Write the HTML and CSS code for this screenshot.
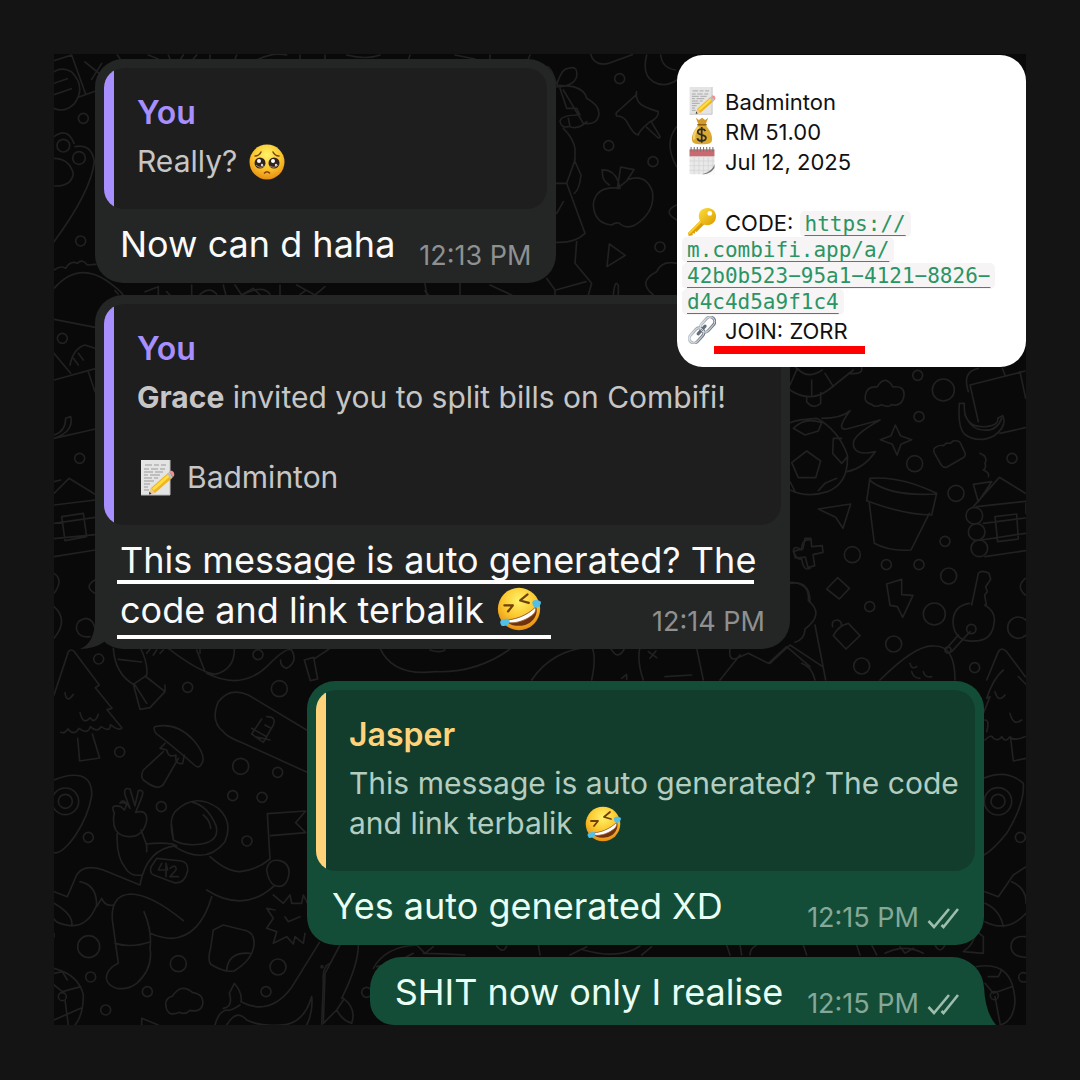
FILE: index.html
```html
<!DOCTYPE html>
<html lang="en">
<head>
<meta charset="utf-8">
<meta name="viewport" content="width=device-width, initial-scale=1">
<title>Group chat</title>
<link rel="stylesheet" href="styles.css">
</head>
<body>
<svg class="defs" width="0" height="0" aria-hidden="true">
  <defs>
    <radialGradient id="face" cx=".5" cy=".3" r=".72">
      <stop offset="0" stop-color="#fff36b"/><stop offset=".55" stop-color="#fbc62c"/><stop offset="1" stop-color="#e58a12"/>
    </radialGradient>
    <linearGradient id="gold" x1="0" y1="0" x2="1" y2="1">
      <stop offset="0" stop-color="#ffe03a"/><stop offset="1" stop-color="#d99a00"/>
    </linearGradient>
    <linearGradient id="steel" x1="0" y1="0" x2="1" y2="1">
      <stop offset="0" stop-color="#c9d1d8"/><stop offset="1" stop-color="#68727c"/>
    </linearGradient>
    <symbol id="memo" viewBox="0 0 36 36">
      <path d="M2 0h29v35H2z" fill="#e4e4e4"/>
      <path d="M31 0v35H2" fill="none" stroke="#bcbcbc"/>
      <path d="M6 5h7m2 0h5m2 0h5M5 9h5m2 0h7m2 0h5M5 12h9m2 0h8M5 15h4m2 0h10M5 18h8m2 0h4M5 21h10M5 24h6M5 27h4M5 30h5" stroke="#999" fill="none"/>
      <path d="M12 28 29 13l4 5-17 15-6 1z" fill="#eeb51e"/>
      <path d="M13 28.500 30 13.500l2 2-17 15z" fill="#ffdc46"/>
      <path d="m12 28 4 5-6 1z" fill="#efc998"/><path d="m10.500 31.500 2 2.500-2.500.500z" fill="#333"/>
      <path d="m28 14 2-2 4 5-2 2z" fill="#b9bec2"/><path d="m30 12 1-1c3-1 5 2 4 5l-1 1z" fill="#ef8f92"/>
    </symbol>
    <symbol id="plead" viewBox="0 0 36 36">
      <circle cx="18" cy="18" r="17.500" fill="url(#face)"/>
      <circle cx="11" cy="19" r="5.500" fill="#33231b"/><circle cx="25" cy="19" r="5.500" fill="#33231b"/>
      <circle cx="10" cy="17" r="2" fill="#fff"/><circle cx="24" cy="17" r="2" fill="#fff"/>
      <circle cx="13" cy="21" r="1.200" fill="#ddd"/><circle cx="27" cy="21" r="1.200" fill="#ddd"/>
      <path d="M7 21q4 4 8 1M21 22q4 3 8-1" stroke="#9e8978" fill="none"/>
      <path d="M6 12q4 0 6-4M30 12q-4 0-6-4" stroke="#77440f" stroke-width="1.500" fill="none" stroke-linecap="round"/>
      <path d="M15.500 29q2.500-2.500 5 0" stroke="#863c12" stroke-width="1.600" fill="none" stroke-linecap="round"/>
    </symbol>
    <symbol id="rofl" viewBox="0 0 36 36">
      <circle cx="18" cy="18" r="17.300" fill="url(#face)"/>
      <path d="M6 27C15 27 25 23 32 16c2 6-2 13-9 15-7 2-13 0-17-4z" fill="#713111"/>
      <path d="M6.500 27C15 27 25 23 31.500 16.500c.5 3-.5 4-1 5C25 27 16 30 9.500 29.200z" fill="#fff" stroke="#9b6430" stroke-width=".7"/>
      <path d="m6 15 7 0-4 5M25 6l-6 5 7 2" stroke="#70400b" stroke-width="1.800" fill="none" stroke-linecap="round" stroke-linejoin="round"/>
      <path d="M29 14c-1-4 4-4 7-2 0 4-4 6-6 4zM9 26c3 2 1 6-5 6-3-4-1-6 5-6z" fill="#52bfe8"/>
    </symbol>
    <symbol id="bag" viewBox="0 0 36 36">
      <path d="m10 1 4 3 4-3 4 3 4-3-4 10h-8z" fill="#d29a2f"/>
      <path d="M14 10h8c5 5 9 12 9 18 0 6-3 7-13 7S5 34 5 28c0-6 4-13 9-18z" fill="#dba832"/>
      <path d="M14 13c-4 4-7 10-6 16" stroke="#f4d269" stroke-width="3" fill="none"/>
      <path d="M12 10h12" stroke="#8e5e13" stroke-width="2"/>
      <path d="M22.500 18c-1-2-3-2.500-5-2.500-3 0-5 1.500-5 3.800 0 5 10.500 2.500 10.500 7.500 0 2.500-2.500 4-5.500 4-2.500 0-5-1-5.500-3.500M17.600 13v20" stroke="#2f2c20" stroke-width="2.200" fill="none"/>
    </symbol>
    <symbol id="calendar" viewBox="0 0 36 36">
      <path d="M2 3h32v32H2z" fill="#e9e9e9"/><path d="M2 3h32v9H2z" fill="#c86a70"/>
      <path d="M4 0v6m4-6v6m4-6v6m4-6v6m4-6v6m4-6v6m4-6v6m4-6v6" stroke="#777" stroke-width="1.400"/>
      <path d="M8 12v23m6-23v23m6-23v23m6-23v23m6-23v20M2 18h32M2 24h32M2 30h28" stroke="#d5d5d5"/>
      <path d="M34 23v12H18c6-1 12-5 16-12z" fill="#fafafa"/><path d="M34 22c-2 7-8 11-16 13 7 0 12-2 16-8z" fill="#777"/>
    </symbol>
    <symbol id="key" viewBox="0 0 36 36">
      <path d="m17 15 5 5-11 11-2-1v3l-3-1v3l-5 1-1-4z" fill="#dc9f06"/><path d="m17 15 2 2L2 34l-2-2z" fill="#f8cd2c"/>
      <path d="M14 12C13 5 18 0 25 0c7 0 11 5 11 11 0 7-6 12-13 11-5-1-8-4-9-10z" fill="url(#gold)"/>
      <circle cx="28" cy="7" r="3" fill="#fff"/>
    </symbol>
    <symbol id="link" viewBox="0 0 36 36">
      <g fill="none" stroke-width="4"><rect x="14" y="5" width="22" height="12" rx="6" transform="rotate(-48 25 11)" stroke="url(#steel)"/>
      <rect x="0" y="19" width="22" height="12" rx="6" transform="rotate(-48 11 25)" stroke="url(#steel)"/>
      <path d="m13 23 9-10" stroke="#646d76" stroke-linecap="round"/></g>
      <g fill="none" stroke="#eef2f5"><rect x="14" y="5" width="22" height="12" rx="6" transform="rotate(-48 25 11)"/><rect x="0" y="19" width="22" height="12" rx="6" transform="rotate(-48 11 25)"/></g>
    </symbol>
    <symbol id="ticks" viewBox="0 0 32 22">
      <path d="m1.500 14 5.500 6L22 2M14.500 18l2 2L31 2" fill="none" stroke="currentColor" stroke-width="2.600"/>
    </symbol>
  </defs>
</svg>

<main class="chat">
  <svg class="wallpaper" viewBox="54 54 972 971" preserveAspectRatio="xMidYMin slice" aria-hidden="true">
    <g transform="translate(40 40) scale(.33333)">
      <path d="M42 62 95 45l42 118M135 66l62 50M185 70l-30 48M42 95q25-15 52 0 45 45 10 95-30 30-62 15M42 130l40-14M42 164l52-18M115 172l50-18M42 290q40-30 60 20M105 320q50-10 58 45-10 90-121 240M42 355q45 0 58 45-5 40-58 38M42 690q20-15 35-5 15-25 35-15 15-15 30 5l25-2M42 745q70-80 155-25 50 35 55 50M315 755l40-15v30M455 735v35M550 735l8 32M585 735l20 30 35-20 20 20M720 735v35M770 735l55 30 30-25M325 45l30 12M385 45l5 12M430 45l-8 12M470 45l-10 12M510 45v12M590 45l-5 12M650 60q50-25 90-15M780 45v12M855 45v12M920 45q60 15 100 0M232 45l10 14"/>
      <circle cx="130" cy="235" r="15"/><circle cx="70" cy="317" r="19"/><circle cx="117" cy="354" r="19"/><circle cx="122" cy="603" r="15"/>
    </g>
    <g transform="translate(400 40) scale(.33333)">
      <path d="M572 43q10 35 50 28l75-27M740 45q-15 60 20 80 35 20 70-5M782 45q5 40 45 45M710 155q-5 10 5 30 10 15 60 30 0 20-25 30-35 30-35 40-15-3-30-32-10-25-35-25-5-10 5-15l55-50M740 262l35 32q5 0 5-5l-25-42M605 390q35-3 50 35l5 20q-70-10-80 45 0 60 55 65 10-8 22-6 20 20 50 5 60-40 50-100-20-55-75-35l20-30-40-8-10 65 30-25M608 390q-5 30 20 45M628 612l48 34-55 34zM440 80q15 0 30 55l50 5q35 10 40 35 45 25 35 55-5 25-45 20l-60-100M470 135q15-50 35-50 30-10 25 25-10 30-60 30M480 145l20 60h30l10 20q-60 0-60 20 5 20 25 15M505 235l5 25q25 10 50-15M490 265q30 30 35 60v35l-25 70h-32M523 360l20 45q-5 45-20 55M500 430l55 150q-30 30-87 27M530 605l-5 65 50 60-10 35M468 750l90-25M440 715l25 35v15M470 520l20-35M75 730l5 35M180 730v35M270 735l65 30M640 765q5-50 15-28v30M830 260q-40 50 0 120M830 495q-45 20 0 45M830 670q-45-10-60 25-60 30-10 70M30 45l-5 15M165 45l60 12M270 45v12M390 45l-5 12"/>
      <circle cx="659" cy="116" r="15"/><circle cx="626" cy="317" r="15"/><circle cx="759" cy="365" r="15"/><circle cx="780" cy="621" r="15"/>
    </g>
    <g transform="translate(40 290) scale(.33333)">
      <path d="M42 88l124 24M42 190l50 60M42 270l124-34M90 225q10-50 45-60l30 10M115 190l15 20M100 205l15 20M145 245l20 60M42 435q35-10 35-50l15-5q10 45-50 65M42 445l124-28M42 610l45-45 78 48M42 575l20-5M42 645l124-15M42 700l124-18M42 746l124-12M65 680l65-10 10 70-65 12zM42 800l124-20M42 850q30 20 0 60M42 950q45 40 0 95M165 870q-35 20 0 40M110 1020q-5-30 30-35 20 5 25 30M110 1020q10 25 40 20M225 2l10 10M390 15l-10-10M480 13q30-25 50 0M610 13q60-30 80 0M1155 2l10 12M780 13l15-10"/>
      <circle cx="67" cy="145" r="15"/><circle cx="119" cy="505" r="15"/>
    </g>
    <g transform="translate(430 500) scale(.33333)">
      <path d="M-150 445q40 85 165 70 130 5 235-75M305 540q60-90 180-100 15 30 0 100M540 442q25 45 45 0M630 442q-10 40 10 98M800 445l20 95M655 455l25 18M678 453l-18 22M705 530l80-5M575 535l15-12v15M0 450q30 10 45 0M900 445q-5 40 20 30l35-15 60 30 55-50 70 60M870 540l60-75M1090 150q5-15 25 0 0-35 25-30M1090 155q15 30 25 20 5 40 25 30M1080 250q60-10 60 55"/>
    </g>
    <g transform="translate(770 360) scale(.33333)">
      <path d="M60 75l22-50q30 35 75 5M60 90q60 40 115 0l75-60M125 60v45M165 40l25 40M85 30q-10-10-15-15M235 40q45 5 40-17M110 110v15q20 25 42 5v-32M305 133q-25-5-18-30 5-25 34-22 25-40 48 0 35-5 33 25-5 35-38 28-5 10-29 0-20 10-30-1zM60 188q25-10 80-13 65 35 92 110 5 85-60 110-60 20-112-5M70 205q35-35 85-17l-10 25-40 12zM110 273l42 30-15 50H85l-20-45zM155 175q60 0 85-23-45 60-10 55l100-27q-80 45-80 70 0 40 66 25-35 50-84 60M190 235h25M190 235l-2 45 27 30 18-20M60 365l15 30M145 392l20-22 35-15M376 195l15 32 34 12-32 14-12 32-14-32-36-14 32-12zM495 263q15-10 25-6l10-8q15 3 18-6 20-3 24 8l14 30q0 10-12 15l-44 26q-12 2-18-10l-20-35q-2-12 3-14zM600 75l165-42M600 75l25 110M595 95q-20-60 30-70M697 25l8 20M750 35l17 80M568 130h15q-5 75 65 70 40-5 35-25l15-8q15 30-25 60-50 25-90-5-20-20-15-90zM585 165q20 45 55 45 40 5 55-35M690 220l76-17M300 355q90-8 200 45l-15 65q-80 0-195-43zM298 360q60 50 202 42M298 430l15 120q45 25 110 20l55-110M145 447l97-15-23 73-22-33zM105 535h18l2 25 32-3 2 20-30 7 5 33-20 6-8-32-30 3-5-20 28-8zM203 653l35 32-30 32-38-30zM350 672l45-14v46l34 2-31 66-16-32-22-4zM630 280q25 10 15 30 5 15-5 20 20 8 15 20M610 373l55-8-40 60zM610 440l78-88 78 48M620 440l146-16M640 490l126-16M635 540l131-20M645 590l121-18M675 470l65-8 5 75-62 8zM625 640q10-12 32 0l5 18-15 22 5 15-8 10 5 30h-5q35 20 28 55-5 45-45 52-75 10-78-55 0-50 50-57M605 735l20-95M565 825l-35 40M600 815l-55 60M330 960q110-110 165-102 60 0 60 102M420 910q5 20 20 10M425 935q5 20 25 20M460 935q5 20 25 15M60 667q60 0 55 55 50 40-10 85 0 30-30 40M135 795l32 165M0 910l60-55 98 65M95 910q30 10 40 50M650 960l35-85q10-15 25 0l56 75M235 790l35 37-42 40-38-40q15-30 45-37zM188 800q-5-20 15-20 15 5 10 20M766 655q-30 25 0 50M768 430v30"/>
      <circle cx="443" cy="46" r="15"/><circle cx="520" cy="90" r="33"/><circle cx="447" cy="170" r="15"/><circle cx="434" cy="311" r="24"/><circle cx="558" cy="400" r="24"/><circle cx="726" cy="295" r="15"/><circle cx="247" cy="584" r="24"/><circle cx="525" cy="544" r="15"/><circle cx="349" cy="614" r="15"/><circle cx="447" cy="614" r="15"/><circle cx="536" cy="648" r="24"/><circle cx="493" cy="762" r="33"/><circle cx="299" cy="740" r="15"/><circle cx="371" cy="852" r="24"/><circle cx="275" cy="918" r="24"/><circle cx="614" cy="923" r="15"/><circle cx="604" cy="807" r="14"/><circle cx="534" cy="870" r="9"/><circle cx="613" cy="467" r="25"/><circle cx="620" cy="516" r="25"/><circle cx="628" cy="565" r="25"/><circle cx="745" cy="803" r="32"/>
    </g>
    <g transform="translate(40 640) scale(.33333)">
      <path d="M42 165 85 35q8-10 18 0l75 100-12 8 50 62-15 4 45 55q-10 10-35-10 0 25-28 6-10 20-32 0-8 25-34 5-15 25-33 2-10 15-22 10M75 158q5 35 25 5M120 218q10 40 30 15 15 20 25-10M113 295l6 68 60-9-22-72M220 25q5 75 60 108l40-27q5-35-20-85M235 58l70 8M280 133l20 75 30-5 45-48-60-47M285 135l35 55M325 115l50 40v-20M385 25q90 70 140 78 60-15 58-78M470 30l25 65M480 25v15M320 40l10-12M340 45l10-15M360 40l10-10M500 100q110 55 190-30 50-50 65-40 20 35-15 55-20-5-18-25M793 60l28-8 12 65-22 5zM825 55l42-28M800 270 625 165q-55-25-90 20-25 60 15 90 10 15 60 35l190 86M680 230q30 0 20 25l-30 52-35-25 30-45M635 265l45 25M645 290l45 10M675 255l15 8M345 260q65-15 115 40 35 40 28 65-10 25-25 10-50-45-115-95-10-15-3-20zM375 310l-15 15 20 5q5 25 28 15-5 30 20 25l5-25M370 335l-60 55q-10 20 0 30 50 40 65 5l40-70M42 420q45-20 80-12 35 10 33 60-10 60-50 120-40 55-63 50M223 520q-15-30 20-20l10 10q15-25-10-22M240 490q10-20 30 15l-15-40q-5-25 15-18l15 50 10-45q20-5 10 20l-18 45q35-10 33 25-10 50-55 48-55-5-42-72M232 575q-5 75 25 110 15 25 47 20M303 570l17 45v20M318 612q45-5 80 0l10 5M300 735q20-110 110-118M400 600q-15-60 5-85 60-60 130-10 45 40 20 100-60 75-155 12M400 600q35 20 85 12 55-10 43-55-25-60-70-70M395 555q5 40 5 45M490 525q20 15 22 40M350 655l75 8q20 5 18 30-10 40-40 35l-60-22q-15-5-10-25zM365 670l-10 20h28l-5-20v40M390 685q20-15 18 5l-18 20h25M510 650q50 45 90 45 50-5 90-38M680 690q5-35 40-28 35 10 25 50-10 35-40 25-20-10-25-47zM700 740q-90 80-200 10M515 770q-35 120-120 125-30 0-65-15M312 815q25 60 18 110 10 60-40 105-25 20-60 15-40-15-28-45 10-20 33-30l-18-130q-5-75 55-78 60 0 158 80M225 910q50 15 105-5M300 735l-110-45q-60-20-80 15l-28 65-40-15M120 725q50 10 50 70-25 65-80 62-40-5-48-20M42 790q60 35 53 68M170 800l15-25q10 25 35 20M42 890l0-10M690 658l-8-137 115-8-30 35 30 30-105 9M700 765l30 25 20-25 5 25h30l5-25 15 30M680 805l25 5M680 805l20 30-20 30 30 10-10 35 40-20 20 22 5-22 25 20 5-30M735 830l10 15 35-15M520 870l30-15 60 15q35 5 32 45-5 45-60 78-30 5-70-20-10-15 0-50zM560 990q5-55 70-50M42 985q75 20 88 80 0 60-25 90M42 1035l25 20 55-15M42 1140l80-35M42 1000l25-5 15 25M75 1080l10 75M378 1100q-5-25 20-32 25-40 60-10 35 5 30 35-5 25-38 18-15 15-32 6-35 15-40-17zM305 1155v-20l50 20M550 1105q30-5 18-45l15-30q25 30 20 55 85 45 150-40l85-137M525 1155q10-40 35-45 10 5 40-15M560 1155q30-50 60-15 40 20 100 15 70 0 95-85 5 45-15 85M870 970q-25 10-20 60l-5 125"/>
      <circle cx="176" cy="57" r="15"/><circle cx="654" cy="44" r="15"/><circle cx="718" cy="146" r="24"/><circle cx="443" cy="142" r="15"/><circle cx="239" cy="336" r="15"/><circle cx="602" cy="379" r="24"/><circle cx="713" cy="397" r="15"/><circle cx="578" cy="467" r="15"/><circle cx="666" cy="472" r="15"/><circle cx="364" cy="500" r="15"/><circle cx="145" cy="592" r="15"/><circle cx="621" cy="603" r="15"/><circle cx="76" cy="484" r="21"/><circle cx="76" cy="484" r="40"/><circle cx="146" cy="920" r="33"/><circle cx="415" cy="971" r="24"/><circle cx="714" cy="981" r="24"/><circle cx="678" cy="1055" r="15"/><circle cx="322" cy="1055" r="15"/><circle cx="152" cy="1011" r="15"/><circle cx="197" cy="1110" r="15"/><circle cx="67" cy="1070" r="12"/>
    </g>
    <g transform="translate(300 670) scale(.33333)">
      <path d="M175 825q0 60-50 160M130 985q40 30 25 75-30-10-45-40l-40 40 5-150 45-85M110 1020l20-30M220 895q35-65 130-70M230 890q60-10 110-40M370 850q60 0 125 5M350 825l25 25 25-20M590 828q20 25 30 0M715 825l5 30M810 855l50-25M850 840q110 30 170-12"/>
      <circle cx="200" cy="967" r="15"/><circle cx="66" cy="890" r="3"/>
    </g>
    <g transform="translate(640 670) scale(.33333)">
      <path d="M1090 0q-30 25-50 85l10-5-20 50M1065 65q10 35 30 10M1110 130q10 40 35 20M1035 150q15 0 5 35M1035 210q20-20 25-5 15 10 25-5 10 20 25 0 10 15 45 0M1112 205l8 68 38-8M1030 325q70-30 120 15 5 60-50 150-40 50-68 65M1035 665l40 15 45-65 38-25M1115 635q45 20 43 65M1035 700q45 20 55 70M1035 755q70 35 123-25M1158 800q-45-5-45 32 5 30 45 30M1010 785l20 15v50l-60-5q30-20 40-60M1010 890q110-20 115 105-5 60-45 70M1035 940l25 30 55-20M1065 980l15 80M1045 920l30 0 10-20M260 825l10 30M300 825l5 30M350 825q-20 10-20 30M490 825l10 30M650 825l10 30M695 825l15 30M735 850q60-30 115 0M780 830l15 20 25-15M885 825q15 30 30 0M5 855l30-25M1135 20l25 25"/>
      <circle cx="1074" cy="394" r="21"/><circle cx="1074" cy="394" r="41"/><circle cx="1141" cy="502" r="15"/><circle cx="1150" cy="922" r="14"/><circle cx="1063" cy="977" r="12"/>
    </g>
  </svg>

  <section class="messages" aria-label="Messages">
    <article class="bubble bubble-in">
      <blockquote class="quote quote-violet">
        <h2 class="quote-name">You</h2>
        <p>Really?<svg class="emoji emoji-quote" role="img" aria-label="pleading face"><use href="#plead"/></svg></p>
      </blockquote>
      <div class="body">
        <p class="text">Now can d haha</p>
        <time class="stamp">12:13 PM</time>
      </div>
    </article>

    <article class="bubble bubble-in bubble-long bubble-tail">
      <blockquote class="quote quote-violet">
        <h2 class="quote-name">You</h2>
        <p><strong>Grace</strong> invited you to split bills on Combifi!</p>
        <p class="quote-item"><svg class="emoji emoji-memo" role="img" aria-label="memo"><use href="#memo"/></svg>Badminton</p>
      </blockquote>
      <div class="body">
        <p class="text"><span class="marked">This message is auto generated? The</span><br><span class="marked marked-low">code and link terbalik<svg class="emoji emoji-body" role="img" aria-label="rolling on the floor laughing"><use href="#rofl"/></svg></span></p>
        <time class="stamp">12:14 PM</time>
      </div>
    </article>

    <article class="bubble bubble-out bubble-reply">
      <blockquote class="quote quote-amber">
        <h2 class="quote-name">Jasper</h2>
        <p>This message is auto generated? The code<br>and link terbalik<svg class="emoji emoji-quote" role="img" aria-label="rolling on the floor laughing"><use href="#rofl"/></svg></p>
      </blockquote>
      <div class="body">
        <p class="text">Yes auto generated XD</p>
        <time class="stamp">12:15 PM<svg class="ticks" role="img" aria-label="delivered"><use href="#ticks"/></svg></time>
      </div>
    </article>

    <article class="bubble bubble-out bubble-last">
      <div class="body">
        <p class="text">SHIT now only I realise</p>
        <time class="stamp">12:15 PM<svg class="ticks" role="img" aria-label="delivered"><use href="#ticks"/></svg></time>
      </div>
      <svg class="tail-out" viewBox="0 0 24 38" aria-hidden="true"><path d="M0 0h12q1 25 12 38H0z" fill="#144d37"/></svg>
    </article>
  </section>

  <aside class="invite">
    <p><svg class="emoji emoji-card" role="img" aria-label="memo"><use href="#memo"/></svg>Badminton</p>
    <p><svg class="emoji emoji-card" role="img" aria-label="money bag"><use href="#bag"/></svg>RM 51.00</p>
    <p><svg class="emoji emoji-card" role="img" aria-label="calendar"><use href="#calendar"/></svg>Jul 12, 2025</p>
    <p class="invite-code"><svg class="emoji emoji-card" role="img" aria-label="key"><use href="#key"/></svg>CODE: <a class="invite-url" href="https://m.combifi.app/a/42b0b523-95a1-4121-8826-d4c4d5a9f1c4">https://<br>m.combifi.app/a/<br>42b0b523−95a1−4121−8826−<br>d4c4d5a9f1c4</a></p>
    <p><svg class="emoji emoji-card" role="img" aria-label="link"><use href="#link"/></svg><span class="invite-join">JOIN: ZORR</span></p>
  </aside>
</main>
</body>
</html>
```

FILE: styles.css
```css
* {
  box-sizing: border-box;
}

body {
  margin: 0;
  padding: 54px;
  background: #141414;
  color: #fafafa;
  font-family: Inter, "Liberation Sans", sans-serif;
}

h2,
p,
blockquote {
  margin: 0;
}

.defs {
  position: absolute;
}

.chat {
  position: relative;
  overflow: hidden;
  background: #090909;
}

.wallpaper {
  position: absolute;
  inset: 0;
  width: 100%;
  height: 100%;
  fill: none;
  stroke: #212121;
  stroke-width: 5;
  stroke-linecap: round;
  stroke-linejoin: round;
}

.messages {
  position: relative;
  display: flex;
  flex-direction: column;
  align-items: flex-start;
  padding: 5px 42px 0 41px;
}

.bubble {
  position: relative;
  max-width: 100%;
  margin-bottom: 12px;
  padding: 9px;
  border-radius: 28px;
  white-space: nowrap;
}

.bubble-in {
  background: #242626;
}

.bubble-out {
  align-self: flex-end;
  background: #144d37;
  color: #e9fff5;
}

.bubble-long {
  width: 695px;
  margin-bottom: 32px;
}

.bubble-reply {
  width: 677px;
}

.bubble-tail::before {
  content: "";
  position: absolute;
  left: -15px;
  bottom: 0;
  width: 32px;
  height: 30px;
  background: #242626;
  clip-path: path("M15 0 Q15 24 0 30 Q14 30 24 23 L32 0 Z");
}

.bubble-last {
  margin-bottom: 0;
  padding-top: 0;
  padding-bottom: 0;
  border-radius: 32px 32px 0 24px;
}

.tail-out {
  position: absolute;
  right: -12px;
  bottom: 0;
  width: 24px;
  height: 38px;
}

.quote {
  padding: 25px 24px 28px 33px;
  border-radius: 20px;
  font-size: 30px;
  line-height: 40px;
}

.quote-violet {
  background: linear-gradient(to right, #a78fff 10px, #1e1e1e 10px);
  color: #c6c6c6;
}

.quote-amber {
  background: linear-gradient(to right, #ffd37a 10px, #123d2c 10px);
  color: #b4cdc1;
}

.quote-name {
  margin-bottom: 8px;
  color: #a78fff;
  font-size: 32px;
  font-weight: 600;
  line-height: 40px;
}

.quote-amber .quote-name {
  color: #ffd37a;
}

.quote-item {
  margin-top: 40px;
}

.body {
  display: flex;
  align-items: flex-end;
  justify-content: space-between;
  gap: 24px;
  padding: 10px 16px 5px;
}

.bubble-last .body {
  padding-bottom: 8px;
}

.text {
  font-size: 36px;
  line-height: 50px;
}

.bubble-long .text {
  flex: 1 1 0;
  min-width: 0;
}

.marked {
  position: relative;
  display: inline-block;
}

.marked::after {
  content: "";
  position: absolute;
  left: -3px;
  right: 2px;
  bottom: 1px;
  height: 4px;
  background: #fff;
}

.marked-low::after {
  right: -10px;
  bottom: -4px;
}

.stamp {
  display: flex;
  align-items: center;
  gap: 8px;
  color: #8f9090;
  font-size: 27px;
  line-height: 26px;
}

.bubble-out .stamp {
  color: #86a898;
}

.ticks {
  width: 32px;
  height: 22px;
  color: #9dbdad;
}

.emoji {
  display: inline-block;
}

.emoji-quote {
  width: 36px;
  height: 36px;
  margin: -8px 0 -8px 12px;
}

.emoji-memo {
  width: 36px;
  height: 36px;
  margin: -8px 12px -8px 2px;
}

.emoji-body {
  width: 44px;
  height: 44px;
  margin: -8px 0 -8px 13px;
}

.emoji-card {
  width: 28px;
  height: 28px;
  margin: -8px 9px -8px 6px;
  vertical-align: 3px;
}

.invite {
  position: absolute;
  top: 1px;
  right: 0;
  width: 349px;
  padding: 32px 5px 21px;
  border-radius: 26px;
  background: #fff;
  color: #111;
  font-size: 22px;
  line-height: 30px;
  white-space: nowrap;
}

.invite-code {
  margin: 34px 0 1px;
  line-height: 25px;
}

.invite-url {
  padding: 1px 5px;
  border-radius: 5px;
  background: #f6f4f4;
  box-decoration-break: clone;
  -webkit-box-decoration-break: clone;
  color: #2b9464;
  font-family: "DejaVu Sans Mono", monospace;
  font-size: 21px;
  text-decoration-thickness: 1px;
  text-underline-offset: 4px;
  text-decoration-skip-ink: none;
}

.invite-join {
  position: relative;
}

.invite-join::after {
  content: "";
  position: absolute;
  left: -11px;
  right: -17px;
  bottom: -10px;
  height: 8px;
  background: #f00;
}
```
